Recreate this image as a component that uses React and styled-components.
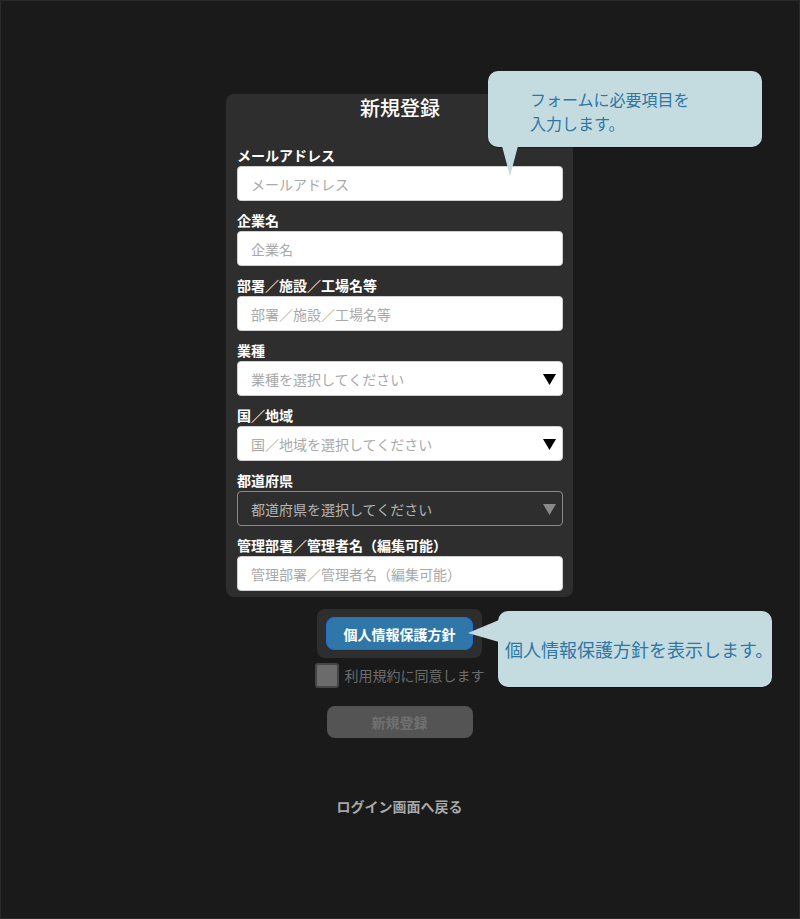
import React from 'react';
import styled, { createGlobalStyle } from 'styled-components';

const GlobalStyle = createGlobalStyle`
  html, body {
    margin: 0;
    padding: 0;
    background: #1a1a1a;
  }
  * { box-sizing: border-box; }
  body {
    font-family: 'Noto Sans CJK JP', 'Noto Sans', sans-serif;
  }
`;

const Page = styled.div`
  position: relative;
  height: 919px;
  border: 1px solid #2a2a2a;
  background: #1a1a1a;
  display: flex;
  flex-direction: column;
  align-items: center;
  padding: 93px 1px 0 0;
`;

const Card = styled.div`
  width: 347px;
  background: #2e2e2e;
  border-radius: 8px;
  padding: 0 10px 6px 11px;
  display: flex;
  flex-direction: column;
  gap: 9px;
`;

const Title = styled.h1`
  margin: 0 0 14px;
  font-size: 20px;
  line-height: 28px;
  font-weight: 500;
  color: #ffffff;
  text-align: center;
`;

const Field = styled.div`
  display: flex;
  flex-direction: column;
  gap: 1px;
`;

const Label = styled.label`
  font-size: 14px;
  line-height: 20px;
  font-weight: 700;
  color: #ffffff;
`;

const Input = styled.input`
  width: 100%;
  height: 35px;
  border: 1px solid #cfcfcf;
  border-radius: 4px;
  background: #ffffff;
  padding: 0 13px;
  font-family: inherit;
  font-size: 14px;
  color: #333;
  outline: none;
  &::placeholder { color: #a9a9a9; }
`;

const SelectWrap = styled.div`
  position: relative;
  height: 35px;
`;

const Select = styled.select`
  appearance: none;
  -webkit-appearance: none;
  width: 100%;
  height: 35px;
  border-radius: 4px;
  padding: 0 13px;
  font-family: inherit;
  font-size: 14px;
  outline: none;
  border: 1px solid ${({ disabled }) => (disabled ? '#8a8a8a' : '#cfcfcf')};
  background: ${({ disabled }) => (disabled ? '#2e2e2e' : '#ffffff')};
  color: ${({ disabled }) => (disabled ? '#b4b4b4' : '#a9a9a9')};
  opacity: 1;
`;

const Arrow = styled.svg`
  position: absolute;
  right: 7px;
  top: 13px;
  width: 13px;
  height: 11px;
  pointer-events: none;
  fill: ${({ $muted }) => ($muted ? '#8a8a8a' : '#000000')};
`;

const PolicyBox = styled.div`
  margin-top: 12px;
  background: #2e2e2e;
  border-radius: 8px;
  padding: 8px 9px;
`;

const PolicyButton = styled.button`
  width: 147px;
  height: 33px;
  border-radius: 8px;
  border: 1px solid #1f6fd1;
  background: #2f77a9;
  color: #ffffff;
  font-family: inherit;
  font-size: 14px;
  font-weight: 700;
  cursor: pointer;
`;

const AgreeRow = styled.label`
  margin-top: 5px;
  display: flex;
  align-items: center;
  gap: 6px;
  color: #6c6c6c;
  font-size: 14px;
  line-height: 25px;
`;

const Box = styled.span`
  width: 24px;
  height: 25px;
  border-radius: 3px;
  background: #6b6b6b;
  border: 2px solid #454545;
`;

const SubmitButton = styled.button`
  margin-top: 18px;
  width: 146px;
  height: 32px;
  border: none;
  border-radius: 8px;
  background: #545454;
  color: #717171;
  font-family: inherit;
  font-size: 14px;
  font-weight: 700;
`;

const BackLink = styled.a`
  margin-top: 58px;
  color: #a8a8a8;
  font-size: 14px;
  font-weight: 700;
  line-height: 20px;
  text-decoration: none;
`;

const Bubble = styled.div`
  position: absolute;
  left: ${({ $left }) => $left}px;
  top: ${({ $top }) => $top}px;
  width: 274px;
  height: 76px;
  background: #c4dce0;
  border-radius: 10px;
  box-shadow: 0 1px 1px rgba(0, 0, 0, 0.35);
  color: #2f76a6;
  display: flex;
  align-items: ${({ $center }) => ($center ? 'center' : 'flex-start')};
  padding: ${({ $pad }) => $pad};
  font-size: ${({ $size }) => $size}px;
  line-height: 24px;
  white-space: nowrap;
`;

const Tail = styled.svg`
  position: absolute;
  fill: #c4dce0;
  overflow: visible;
`;

const selects = [
  { label: '業種', text: '業種を選択してください' },
  { label: '国／地域', text: '国／地域を選択してください' },
  { label: '都道府県', text: '都道府県を選択してください', disabled: true },
];

const SelectField = ({ label, text, disabled }) => (
  <Field>
    <Label>{label}</Label>
    <SelectWrap>
      <Select disabled={disabled} defaultValue="">
        <option value="">{text}</option>
      </Select>
      <Arrow $muted={disabled} viewBox="0 0 13 11">
        <polygon points="0,0 13,0 6.5,11" />
      </Arrow>
    </SelectWrap>
  </Field>
);

const App = () => (
  <>
    <GlobalStyle />
    <Page>
      <Card>
        <Title>新規登録</Title>
        <Field>
          <Label>メールアドレス</Label>
          <Input placeholder="メールアドレス" />
        </Field>
        <Field>
          <Label>企業名</Label>
          <Input placeholder="企業名" />
        </Field>
        <Field>
          <Label>部署／施設／工場名等</Label>
          <Input placeholder="部署／施設／工場名等" />
        </Field>
        {selects.map(s => (
          <SelectField key={s.label} {...s} />
        ))}
        <Field>
          <Label>管理部署／管理者名（編集可能）</Label>
          <Input placeholder="管理部署／管理者名（編集可能）" />
        </Field>
      </Card>

      <PolicyBox>
        <PolicyButton type="button">個人情報保護方針</PolicyButton>
      </PolicyBox>
      <AgreeRow>
        <Box />
        利用規約に同意します
      </AgreeRow>
      <SubmitButton type="button" disabled>新規登録</SubmitButton>
      <BackLink href="#">ログイン画面へ戻る</BackLink>

      <Bubble $left={487} $top={70} $pad="16px 0 0 42px" $size={16}>
        フォームに必要項目を<br />入力します。
        <Tail style={{ left: 14, top: 75 }} width="16" height="30" viewBox="0 0 16 30">
          <polygon points="0,0 16,0 8,30" />
        </Tail>
      </Bubble>
      <Bubble $left={497} $top={610} $pad="0 0 0 7px" $size={18} $center>
        個人情報保護方針を表示します。
        <Tail style={{ left: -30, top: 9 }} width="31" height="22" viewBox="0 0 31 22">
          <polygon points="31,0 0,13 31,22" />
        </Tail>
      </Bubble>
    </Page>
  </>
);

export default App;
